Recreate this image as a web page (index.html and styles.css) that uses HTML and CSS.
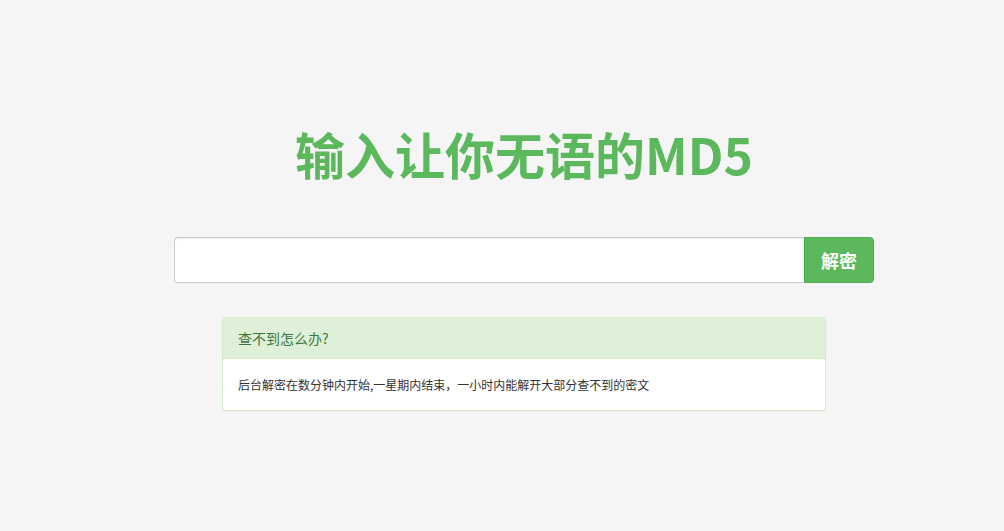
FILE: index.html
```html
<!DOCTYPE html>
<html lang="zh-CN">
<head>
<meta charset="utf-8">
<title>输入让你无语的MD5</title>
<link rel="stylesheet" href="styles.css">
</head>
<body>
<div class="page">
  <h1 class="title">输入让你无语的MD5</h1>
  <form class="search" onsubmit="return false">
    <input class="search-input" type="text">
    <button class="search-btn" type="button">解密</button>
  </form>
  <div class="panel">
    <div class="panel-heading">查不到怎么办?</div>
    <div class="panel-body">后台解密在数分钟内开始,一星期内结束，一小时内能解开大部分查不到的密文</div>
  </div>
</div>
</body>
</html>
```
FILE: styles.css
```css
html, body {
  margin: 0;
  padding: 0;
}
body {
  background: #f5f5f5;
  font-family: "Noto Sans CJK SC", "Noto Sans", sans-serif;
  color: #333;
  height: 531px;
  overflow: hidden;
}
.page {
  padding-left: 44px;
  padding-top: 125px;
  display: flex;
  flex-direction: column;
  align-items: center;
}
.title {
  margin: 0;
  font-size: 50px;
  line-height: 56px;
  font-weight: 700;
  color: #5cb85c;
}
.search {
  margin-top: 56px;
  display: flex;
  width: 700px;
  height: 46px;
}
.search-input {
  flex: 1;
  box-sizing: border-box;
  height: 46px;
  border: 1px solid #ccc;
  border-right: none;
  border-radius: 4px 0 0 4px;
  background: #fff;
  box-shadow: inset 0 1px 1px rgba(0,0,0,.075);
  padding: 0 16px;
  font-size: 18px;
  outline: none;
}
.search-btn {
  width: 70px;
  height: 46px;
  box-sizing: border-box;
  border: 1px solid #4cae4c;
  border-radius: 0 4px 4px 0;
  background: #5cb85c;
  color: #fff;
  font-family: inherit;
  font-size: 18px;
  font-weight: 700;
  padding: 0;
}
.panel {
  margin-top: 34px;
  width: 604px;
  box-sizing: border-box;
  background: #fff;
  border: 1px solid #d6e9c6;
  border-radius: 4px;
  box-shadow: 0 1px 1px rgba(0,0,0,.05);
}
.panel-heading {
  background: #dff0d8;
  color: #3c763d;
  border-bottom: 1px solid #d6e9c6;
  border-radius: 3px 3px 0 0;
  padding: 10px 15px;
  font-size: 14px;
  line-height: 20px;
}
.panel-body {
  padding: 15px;
  font-size: 12px;
  line-height: 21px;
  color: #333;
}
```
